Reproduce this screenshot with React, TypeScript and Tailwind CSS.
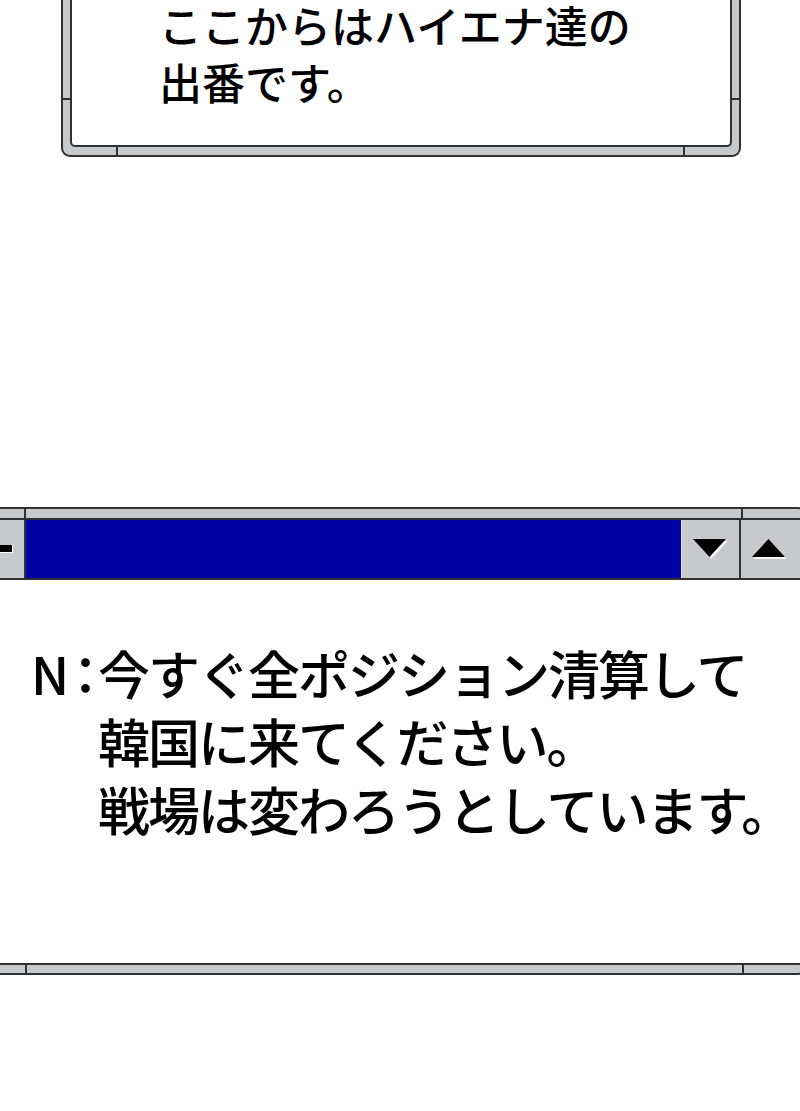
const dark = 'border-[#2f3133]';

function Tri({ up }: { up?: boolean }) {
  const pts = up ? '16.5,0 33,18 0,18' : '0,0 33,0 16.5,18';
  return (
    <svg width="36" height="21" viewBox="0 0 36 21">
      <polygon points={pts} fill="#ffffff" transform="translate(1.8,1.8)" />
      <polygon points={pts} fill="#000000" />
    </svg>
  );
}

export default function App() {
  return (
    <div className="relative h-[1111px] w-[800px] overflow-hidden bg-white font-['Noto_Sans_CJK_JP','Noto_Sans',sans-serif] font-medium text-black">
      {/* top message box, cut at the top edge */}
      <div className={`relative ml-[61px] h-[157px] w-[680px] rounded-b-[9px] border-x-2 border-b-2 ${dark} bg-[#c7c9cc] px-[7px] pb-[8px]`}>
        <div className={`flex h-full flex-col rounded-b-[5px] border-x-2 border-b-2 ${dark} bg-white pl-[87px]`}>
          <p className="-mt-[4px] whitespace-nowrap text-[43px] leading-[57px]">
            ここからはハイエナ達の
            <br />
            出番です。
          </p>
        </div>
        <div className="absolute left-0 top-[98px] h-[2px] w-[7px] bg-[#2f3133]" />
        <div className="absolute right-0 top-[98px] h-[2px] w-[7px] bg-[#2f3133]" />
        <div className="absolute bottom-0 left-[53px] h-[8px] w-[2px] bg-[#2f3133]" />
        <div className="absolute bottom-0 left-[620px] h-[8px] w-[2px] bg-[#2f3133]" />
      </div>

      {/* window */}
      <div className={`relative mt-[350px] w-[812px] rounded-r-[14px] border-y-2 border-r-2 ${dark} bg-[#c7c9cc] pb-[8px] pr-[8px] pt-[9px]`}>
        <div className="absolute left-[24px] top-0 h-[9px] w-[2px] bg-[#2f3133]" />
        <div className="absolute left-[741px] top-0 h-[9px] w-[2px] bg-[#2f3133]" />
        <div className="absolute bottom-0 left-[25px] h-[8px] w-[2px] bg-[#2f3133]" />
        <div className="absolute bottom-0 left-[742px] h-[8px] w-[2px] bg-[#2f3133]" />

        <div className={`border-y-2 border-r-2 ${dark} bg-white`}>
          {/* title bar */}
          <div className={`flex h-[60px] border-b-2 ${dark} bg-[#c7c9cc]`}>
            <div className="flex w-[24px] shrink-0 items-center">
              <div className="h-[8px] w-[13px] border-b border-r border-white bg-black" />
            </div>
            <div className="w-[2px] shrink-0 bg-[#2f3133]" />
            <div className="flex-1 bg-[#0201a3]" />
            <div className="flex w-[58px] shrink-0 items-center justify-center border-l border-[#e4e5e7] pl-[1px]">
              <Tri />
            </div>
            <div className="w-[2px] shrink-0 bg-[#2f3133]" />
            <div className="flex w-[59px] shrink-0 items-center pl-[11px]">
              <Tri up />
            </div>
          </div>

          {/* body */}
          <div className="grid h-[383px] grid-cols-[67px_1fr] pl-[31px] pt-[59px] text-[52px] leading-[68px] tracking-[-2px]">
            <div className="flex h-[68px]">
              <span className="w-[40px]">N</span>
              <span className="flex w-[27px] justify-center">：</span>
            </div>
            <div className="whitespace-nowrap">
              今すぐ全ポジション清算して
              <br />
              韓国に来てください。
              <br />
              戦場は変わろうとしています。
            </div>
          </div>
        </div>
      </div>
    </div>
  );
}
